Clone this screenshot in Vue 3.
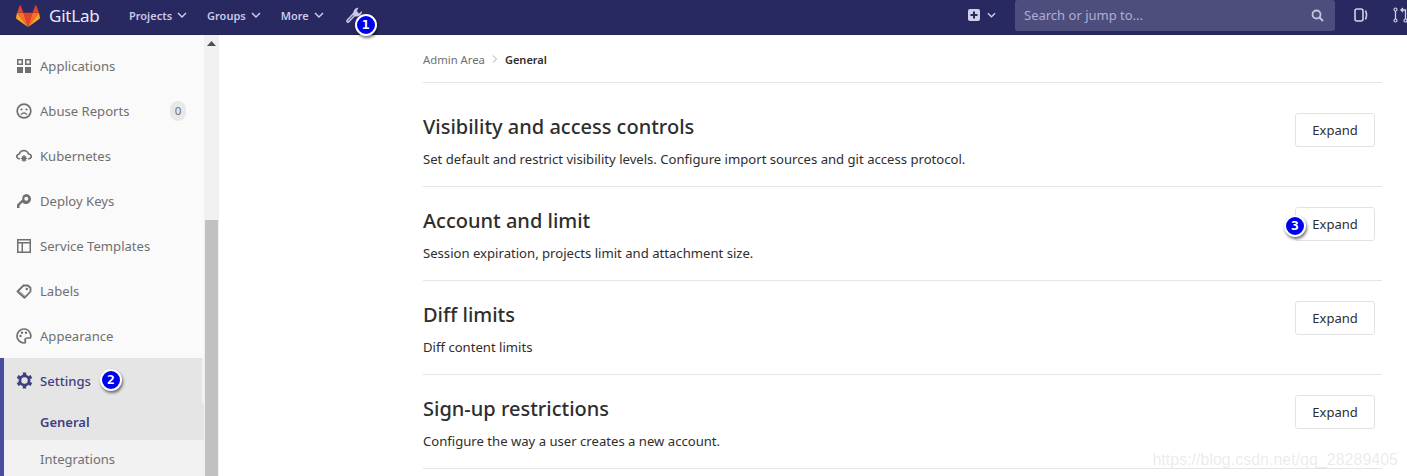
<script setup>
const nav = ['Projects', 'Groups', 'More']
const items = [
  { label: 'Applications', icon: 'apps' },
  { label: 'Abuse Reports', icon: 'face', count: 0 },
  { label: 'Kubernetes', icon: 'cloud' },
  { label: 'Deploy Keys', icon: 'key' },
  { label: 'Service Templates', icon: 'tpl' },
  { label: 'Labels', icon: 'label' },
  { label: 'Appearance', icon: 'palette' }
]
const sections = [
  { title: 'Visibility and access controls', text: 'Set default and restrict visibility levels. Configure import sources and git access protocol.' },
  { title: 'Account and limit', text: 'Session expiration, projects limit and attachment size.', mark: true },
  { title: 'Diff limits', text: 'Diff content limits' },
  { title: 'Sign-up restrictions', text: 'Configure the way a user creates a new account.' }
]
</script>

<template>
  <div class="page">
    <header class="top">
      <svg class="logo" viewBox="0 0 26 24" width="24" height="22">
        <path d="M13 24 L18 8.5 H8 Z" fill="#e24329" />
        <path d="M13 24 L8 8.5 H1 Z" fill="#fc6d26" />
        <path d="M1 8.5 L0 13.5 Q0 15 1 15.5 L13 24 Z" fill="#fca326" />
        <path d="M1 8.5 H8 L5 0.5 Q4.5 0 4 0.5 Z" fill="#e24329" />
        <path d="M13 24 L18 8.5 H25 Z" fill="#fc6d26" />
        <path d="M25 8.5 L26 13.5 Q26 15 25 15.5 L13 24 Z" fill="#fca326" />
        <path d="M25 8.5 H18 L21 0.5 Q21.5 0 22 0.5 Z" fill="#e24329" />
      </svg>
      <span class="brand">GitLab</span>
      <nav class="nav">
        <span v-for="n in nav" :key="n" class="nav-item">
          {{ n }}
          <svg width="10" height="6" viewBox="0 0 10 6"><path d="M1 1l4 4 4-4" fill="none" stroke="#d1d0e8" stroke-width="1.4" /></svg>
        </span>
      </nav>
      <span class="wrench">
        <svg width="18" height="17" viewBox="0 0 18 17">
          <path d="M3 14 L9.500 7" fill="none" stroke="#c9c8e6" stroke-width="3.800" stroke-linecap="round" />
          <path d="M3 14 L8 8.600" fill="none" stroke="#5a5a90" stroke-width="1.100" stroke-linecap="round" />
          <path d="M8.500 8 Q7.800 3.500 10.500 1.500 Q11.800 .6 13.500 .8 L11.800 4 L14 6.500 L17 4 Q17.300 6.500 15.300 8.300 Q13 10 10.500 9.500 Z" fill="#c9c8e6" />
        </svg>
        <b class="mark mark-1">1</b>
      </span>
      <div class="right">
        <span class="plus">
          <svg width="12" height="12" viewBox="0 0 12 12"><rect width="12" height="12" rx="2" fill="#d1d0e8" /><path d="M6 2.500v7M2.500 6h7" stroke="#292961" stroke-width="2" /></svg>
          <svg width="9" height="6" viewBox="0 0 10 6"><path d="M1 1l4 4 4-4" fill="none" stroke="#d1d0e8" stroke-width="1.400" /></svg>
        </span>
        <div class="search">
          <span>Search or jump to...</span>
          <svg width="13" height="13" viewBox="0 0 13 13"><circle cx="5.500" cy="5.500" r="4" fill="none" stroke="#c5c4dd" stroke-width="1.800" /><path d="M8.500 8.500l3.500 3.500" stroke="#c5c4dd" stroke-width="2" /></svg>
        </div>
        <svg class="tool-a" width="14" height="14" viewBox="0 0 14 14"><rect x="1" y="1" width="8" height="12" rx="2" fill="none" stroke="#d1d0e8" stroke-width="1.600" /><path d="M11.500 2.500 Q13.500 7 11.500 11.500" fill="none" stroke="#d1d0e8" stroke-width="1.600" /></svg>
        <svg class="tool-b" width="15" height="16" viewBox="0 0 15 16"><circle cx="2.500" cy="2.500" r="1.500" fill="none" stroke="#d1d0e8" stroke-width="1.200" /><circle cx="2.500" cy="13.500" r="1.500" fill="none" stroke="#d1d0e8" stroke-width="1.200" /><circle cx="12.500" cy="13.500" r="1.500" fill="none" stroke="#d1d0e8" stroke-width="1.200" /><path d="M2.500 4v8M12.500 12V3H8M10 1L8 3l2 2" fill="none" stroke="#d1d0e8" stroke-width="1.300" /></svg>
      </div>
    </header>

    <div class="body">
      <aside class="side">
        <div class="side-list">
          <div v-for="it in items" :key="it.label" class="row">
            <svg class="ic" width="16" height="16" viewBox="0 0 16 16">
              <g v-if="it.icon === 'apps'" fill="#707070">
                <path d="M1 1h6v6H1zM2.500 2.500v3h3v-3zM9 1h6v6H9zM10.500 2.500v3h3v-3z" fill-rule="evenodd" />
                <rect x="1" y="9" width="6" height="6" /><rect x="9" y="9" width="6" height="6" />
              </g>
              <g v-else-if="it.icon === 'face'">
                <circle cx="8" cy="8" r="6.800" fill="none" stroke="#707070" stroke-width="1.700" />
                <circle cx="5.500" cy="6.500" r="1.100" fill="#707070" /><circle cx="10.500" cy="6.500" r="1.100" fill="#707070" />
                <path d="M5 11.500 Q8 8.500 11 11.500" fill="none" stroke="#707070" stroke-width="1.500" />
              </g>
              <g v-else-if="it.icon === 'cloud'">
                <path d="M3.800 11 Q0.800 10.500 .8 8.500 Q.8 6.500 3.200 6 Q4.500 2.500 8.200 2.500 Q11.500 2.800 12.600 6 Q15.300 6.500 15.300 8.500 Q15.300 10.500 12.200 11 " fill="none" stroke="#707070" stroke-width="1.700" />
                <circle cx="8" cy="10.500" r="2.200" fill="#707070" />
                <path d="M8 7v7M4.800 10.500h6.400M5.800 8.300l4.400 4.400M10.200 8.300l-4.400 4.400" stroke="#707070" stroke-width="1.200" />
              </g>
              <g v-else-if="it.icon === 'key'">
                <path d="M10 1a5 5 0 1 1-3.600 8.500L3.500 12.500V15H1v-3.500l5.300-5A5 5 0 0 1 10 1z" fill="#707070" />
                <circle cx="10.300" cy="5.700" r="2" fill="#fafafa" />
              </g>
              <g v-else-if="it.icon === 'tpl'">
                <path d="M1 1h14v14H1zM2.500 5.500v8h3v-8zM7 5.500v8h6.500v-8zM2.500 2.500v1.500h11V2.500z" fill="#707070" fill-rule="evenodd" />
              </g>
              <g v-else-if="it.icon === 'label'">
                <path d="M7.500 2.500h4.500l2.500 2.500v3.500l-6 6.300L1.500 8.500z" fill="none" stroke="#707070" stroke-width="1.800" stroke-linejoin="round" />
                <path d="M4 8.500L8.500 13" stroke="#707070" stroke-width="1" />
                <circle cx="10.800" cy="6" r="1.200" fill="#707070" />
              </g>
              <g v-else>
                <path d="M8 1a7 7 0 1 0 0 14c2 0 1.500-2 1-3 0-1.500 1-2 2.500-2H14c1-.5 1-2 .5-4C13.500 3 11 1 8 1z" fill="none" stroke="#707070" stroke-width="1.700" />
                <circle cx="4.500" cy="8" r="1.200" fill="#707070" /><circle cx="6" cy="4.800" r="1.200" fill="#707070" /><circle cx="10" cy="4.800" r="1.200" fill="#707070" />
              </g>
            </svg>
            <span>{{ it.label }}</span>
            <span v-if="it.count !== undefined" class="count">{{ it.count }}</span>
          </div>
        </div>
        <div class="group">
          <div class="row active">
            <svg class="ic" width="17" height="17" viewBox="0 0 16 16">
              <circle cx="8" cy="8" r="4.300" fill="none" stroke="#3f3f82" stroke-width="2.600" />
              <path d="M8 0.500V3M8 13v2.500M1.500 4.250l2.200 1.250M12.300 10.500l2.200 1.250M1.500 11.750l2.200-1.250M12.300 5.500l2.200-1.250" stroke="#3f3f82" stroke-width="3.200" />
            </svg>
            <span>Settings</span>
            <b class="mark mark-2">2</b>
          </div>
          <div class="sub current">General</div>
          <div class="sub">Integrations</div>
        </div>
      </aside>
      <div class="scroll">
        <svg class="arrow" width="9" height="5" viewBox="0 0 9 5"><path d="M0 5L4.500 0 9 5z" fill="#505050" /></svg>
        <div class="thumb"></div>
      </div>

      <main class="main">
        <div class="crumbs">
          <span>Admin Area</span>
          <svg width="6" height="8" viewBox="0 0 6 8"><path d="M1 .5L4.500 4 1 7.500" fill="none" stroke="#a8a8a8" stroke-width="1" /></svg>
          <strong>General</strong>
        </div>
        <section v-for="s in sections" :key="s.title" class="sec">
          <div>
            <h4>{{ s.title }}</h4>
            <p>{{ s.text }}</p>
          </div>
          <button class="btn">
            Expand
            <b v-if="s.mark" class="mark mark-3">3</b>
          </button>
        </section>
      </main>
    </div>
    <div class="water">https://blog.csdn.net/qq_28289405</div>
  </div>
</template>

<style>
html, body { margin: 0; background: #fff; }
</style>

<style scoped>
.page { position: relative; width: 1407px; height: 476px; overflow: hidden; font-family: "Noto Sans", sans-serif; background: #fff; color: #2e2e2e; }
.top { height: 35px; background: #292961; display: flex; align-items: center; padding-left: 16px; box-sizing: border-box; border-bottom: 1px solid #252556; position: relative; }
.logo { flex: none; margin-top: -3px; }
.brand { margin-left: 9px; font-size: 17px; color: #e8e8f4; width: 55px; margin-top: -4px; letter-spacing: -.2px; }
.nav { display: flex; margin-left: 25px; gap: 20px; margin-top: -4px; }
.nav-item { font-size: 11px; font-weight: 600; color: #c9c8e6; display: flex; align-items: center; gap: 5px; }
.wrench { position: relative; margin-left: 21px; margin-top: -4px; display: block; width: 18px; height: 17px; }
.right { margin-left: auto; display: flex; align-items: center; margin-top: -4px; }
.plus { display: flex; align-items: center; gap: 7px; }
.search { margin-left: 19px; width: 320px; height: 31px; box-sizing: border-box; background: #4d4d7e; border-radius: 3px; display: flex; align-items: center; justify-content: space-between; padding: 0 11px 0 9px; font-size: 13px; color: #b0afd4; flex: none; }
.tool-a { margin-left: 19px; flex: none; }
.tool-b { margin-left: 25px; margin-right: -1px; flex: none; }
.mark { position: absolute; width: 18px; height: 18px; border-radius: 50%; background: #0000f0; border: 2px solid #fff; box-shadow: 1px 2px 3px rgba(0,0,0,.55); color: #fff; font: 700 13px/18px "DejaVu Sans Mono", monospace; text-align: center; z-index: 3; }
.mark-1 { left: 10px; top: 7px; }
.mark-2 { left: 96px; top: 11px; }
.mark-3 { left: -12px; top: 7px; }
.body { display: flex; height: 441px; }
.side { width: 204px; flex: none; background: #fafafa; padding-top: 8px; box-sizing: border-box; }
.row { position: relative; height: 45px; display: flex; align-items: center; padding-left: 16px; font-size: 13.100px; color: #707070; box-sizing: border-box; }
.ic { flex: none; margin-right: 8px; }
.count { position: absolute; left: 170px; top: 13px; width: 16px; height: 20px; border-radius: 8px; background: #e8e8e8; color: #707070; font-size: 11.500px; line-height: 20px; text-align: center; }
.group { border-left: 4px solid #4b4ba3; background: #f2f2f2; }
.group .row { padding-left: 12px; }
.active { background: #e5e5e5; color: #3f3f82; font-weight: 500; width: 198px; }
.active .ic { margin-right: 7px; }
.sub { height: 37px; line-height: 38px; padding-left: 36px; font-size: 13px; color: #707070; }
.current { background: #e5e5e5; color: #3f3f82; font-weight: 600; }
.scroll { width: 15px; flex: none; background: #f1f1f1; position: relative; display: flex; flex-direction: column; align-items: center; }
.arrow { margin-top: 6px; }
.thumb { margin-top: 174px; width: 13px; flex: 1; background: #c1c1c1; }
.main { width: 959px; margin-left: 204px; flex: none; }
.crumbs { height: 48px; border-bottom: 1px solid #e5e5e5; display: flex; align-items: center; gap: 7px; font-size: 11.300px; color: #707070; box-sizing: border-box; padding-top: 1px; }
.crumbs strong { color: #2e2e2e; font-weight: 600; font-size: 11px; }
.sec { height: 94px; border-bottom: 1px solid #e5e5e5; box-sizing: border-box; display: flex; justify-content: space-between; padding: 20px 7px 0 0; }
.sec:first-of-type { height: 104px; padding-top: 30px; }
h4 { margin: -1px 0 0; font-size: 20px; line-height: 30px; font-weight: 500; color: #2e2e2e; }
p { margin: 8px 0 0; font-size: 13.120px; line-height: 19px; color: #2e2e2e; }
.btn { position: relative; width: 80px; height: 34px; background: #fff; border: 1px solid #e3e3e3; border-radius: 3px; font: 13px "Noto Sans", sans-serif; color: #2e2e2e; padding: 0; }
.water { position: absolute; right: 9px; bottom: 7px; font: 16px "Liberation Sans", sans-serif; color: rgba(150,150,150,.2); }
</style>
